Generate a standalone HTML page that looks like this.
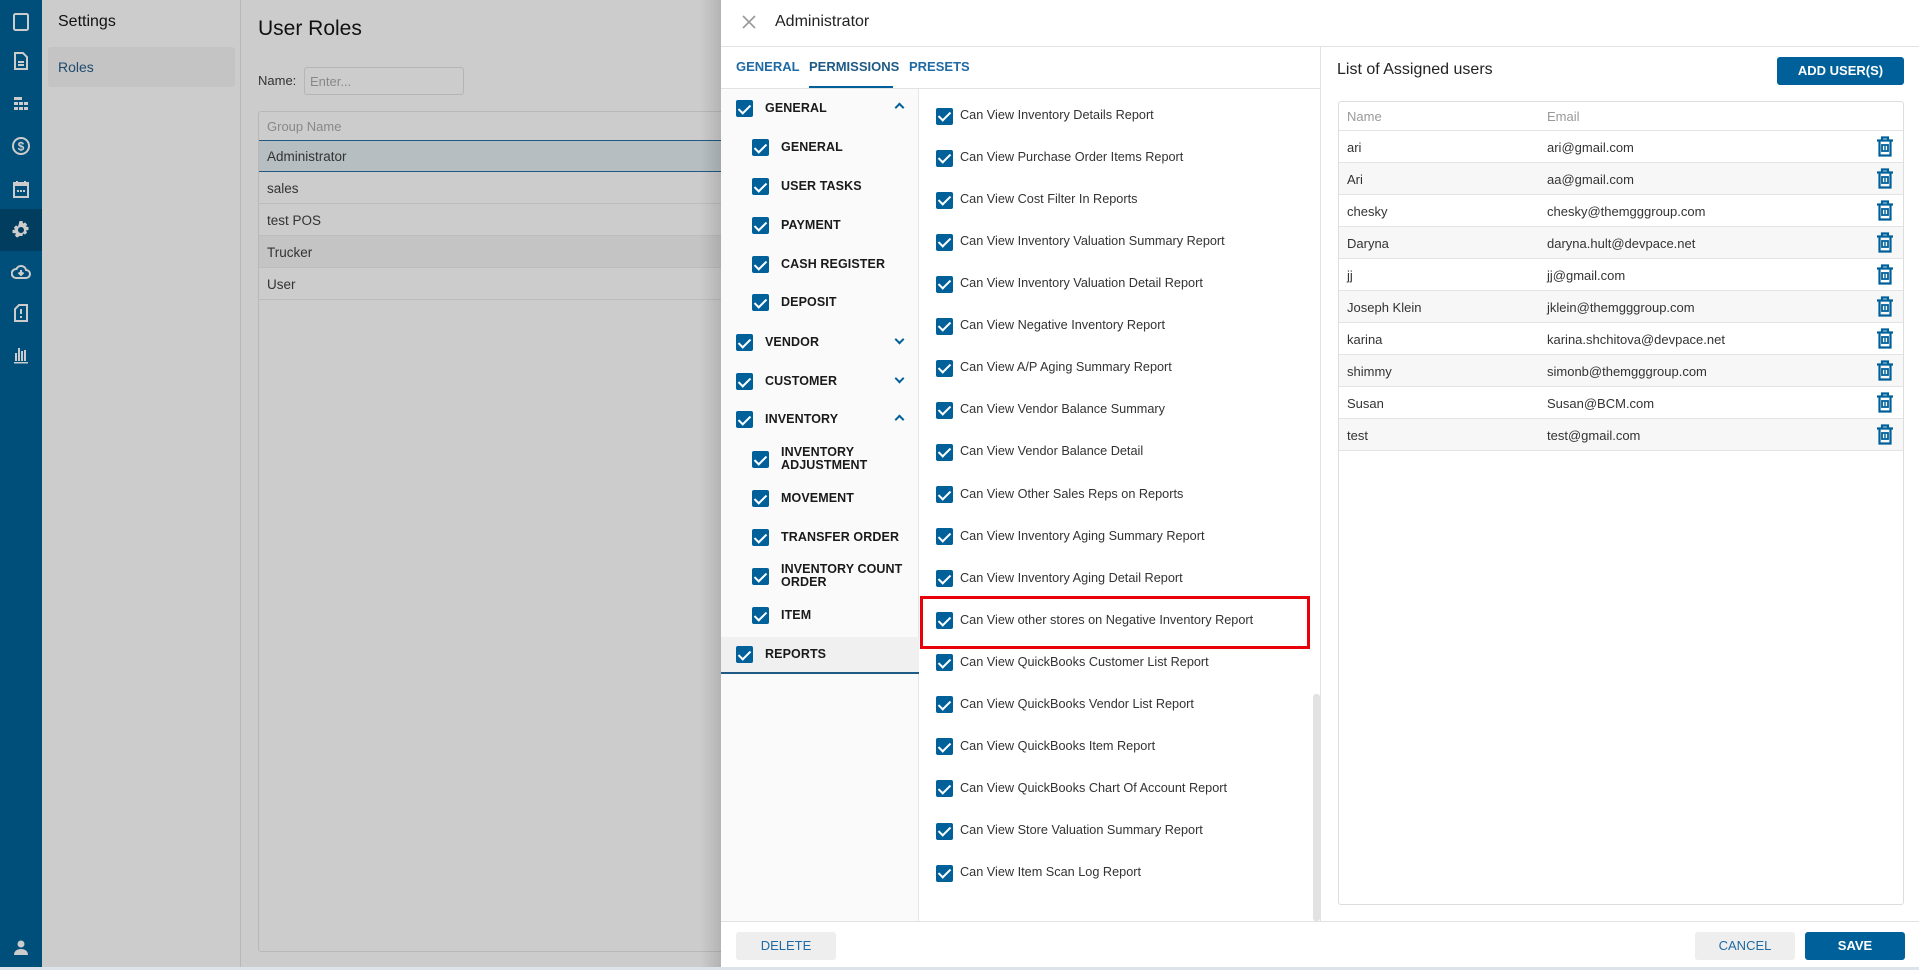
<!DOCTYPE html>
<html><head><meta charset="utf-8">
<style>
*{box-sizing:border-box;margin:0;padding:0}
body{width:1919px;height:970px;overflow:hidden;font-family:"Liberation Sans",sans-serif;background:#cccccc;position:relative;color:#222}
.abs{position:absolute}
.nav{left:0;top:0;width:42px;height:970px;background:#004f7a}
.nav svg{position:absolute;left:11px;width:20px;height:20px}
.cb{position:absolute;width:17px;height:17px;background:#00609a;border-radius:2px}
.cb:after{content:"";position:absolute;left:5px;top:1.5px;width:5px;height:10px;border:solid #fff;border-width:0 2px 2px 0;transform:rotate(45deg)}
.tl{position:absolute;font-size:12.5px;font-weight:bold;color:#1a1a1a;line-height:13px;letter-spacing:.1px}
.pl{position:absolute;left:960px;font-size:12.7px;color:#333}
.btn{position:absolute;border-radius:3px;font-size:13px;font-weight:bold;text-align:center;line-height:28px}
.ur{position:absolute;left:1339px;width:564px;height:32px;border-top:1px solid #e4e4e4;font-size:13px;color:#333}
.ur span{position:absolute;top:9px}
.ur svg{position:absolute;left:536px;top:5px}
.chev{position:absolute;width:7px;height:7px;border:solid #00609a;border-width:2px 2px 0 0}
</style></head><body>
<div class="abs nav">
<svg style="top:12px" viewBox="0 0 20 20"><rect x="3" y="2" width="14" height="16" rx="1.5" fill="none" stroke="#ccc" stroke-width="2"/></svg>
<svg style="top:51px" viewBox="0 0 20 20"><path d="M4 2h8l4 4v12H4z" fill="none" stroke="#ccc" stroke-width="2"/><path d="M7 11h6M7 14h6" stroke="#ccc" stroke-width="2"/></svg>
<svg style="top:94px" viewBox="0 0 20 20"><g fill="#ccc"><rect x="3" y="3" width="8" height="3"/><rect x="3" y="8" width="4" height="3"/><rect x="8" y="8" width="4" height="3"/><rect x="13" y="8" width="4" height="3"/><rect x="3" y="13" width="4" height="3"/><rect x="8" y="13" width="4" height="3"/><rect x="13" y="13" width="4" height="3"/></g></svg>
<svg style="top:136px" viewBox="0 0 20 20"><circle cx="10" cy="10" r="8" fill="none" stroke="#ccc" stroke-width="2"/><text x="10" y="14.5" font-size="12" font-weight="bold" text-anchor="middle" fill="#ccc" font-family="Liberation Sans">$</text></svg>
<svg style="top:179px" viewBox="0 0 20 20"><rect x="3" y="4" width="14" height="14" fill="none" stroke="#ccc" stroke-width="2"/><rect x="3" y="4" width="14" height="3" fill="#ccc"/><path d="M6 2v3M14 2v3" stroke="#ccc" stroke-width="2"/><path d="M6 12h2M9 12h2M12 12h2" stroke="#ccc" stroke-width="2"/></svg>
<div class="abs" style="left:0;top:209px;width:42px;height:42px;background:#003d5e"></div>
<svg style="top:220px" viewBox="0 0 20 20"><path fill="#ccc" d="M8.5 1h3l.5 2.6 2-1.2 2.1 2.1-1.2 2 2.6.5v3l-2.6.5 1.2 2-2.1 2.1-2-1.2-.5 2.6h-3L8 16.4l-2 1.2-2.1-2.1 1.2-2L1.5 13v-3l2.6-.5-1.2-2L5 5.4l2 1.2zM10 7a3 3 0 100 6 3 3 0 000-6z"/></svg>
<svg style="top:262px" viewBox="0 0 20 20"><path d="M5 16h10a4 4 0 000-8 5 5 0 00-9.5-1A4.5 4.5 0 005 16z" fill="none" stroke="#ccc" stroke-width="2"/><path d="M10 8v5M7.5 10.5L10 13l2.5-2.5" stroke="#ccc" stroke-width="2" fill="none"/></svg>
<svg style="top:303px" viewBox="0 0 20 20"><path d="M8 2h8v16H4V6z" fill="none" stroke="#ccc" stroke-width="2"/><path d="M10 6v5M10 13v2" stroke="#ccc" stroke-width="2"/></svg>
<svg style="top:345px" viewBox="0 0 20 20"><g fill="#ccc"><rect x="4" y="8" width="2" height="8"/><rect x="7" y="3" width="2" height="13"/><rect x="10" y="6" width="2" height="10"/><rect x="13" y="5" width="2" height="11"/><rect x="3" y="17" width="14" height="1.5"/></g></svg>
<svg style="top:938px" viewBox="0 0 20 20"><circle cx="10" cy="6" r="3.5" fill="#ccc"/><path d="M3 17c0-4 3-6 7-6s7 2 7 6z" fill="#ccc"/></svg>
</div>
<div class="abs" style="left:42px;top:0;width:199px;height:970px;border-right:1px solid #b8b8b8"></div>
<div class="abs" style="left:58px;top:13px;font-size:16px;color:#111">Settings</div>
<div class="abs" style="left:48px;top:47px;width:187px;height:40px;background:#c4c4c4;border-radius:3px"></div>
<div class="abs" style="left:58px;top:59px;font-size:14px;color:#1f4a6e">Roles</div>
<div class="abs" style="left:258px;top:17px;font-size:21px;color:#111">User Roles</div>
<div class="abs" style="left:258px;top:73px;font-size:13px;color:#333">Name:</div>
<div class="abs" style="left:304px;top:67px;width:160px;height:28px;border:1px solid #b5b5b5;border-radius:3px;font-size:13px;color:#888;padding:6px 5px">Enter...</div>
<div class="abs" style="left:258px;top:111px;width:500px;height:841px;border:1px solid #b8b8b8;border-radius:3px"></div>
<div class="abs" style="left:267px;top:119px;font-size:13px;color:#888">Group Name</div>
<div class="abs" style="left:259px;top:140px;width:470px;height:32px;background:#b6bec2;border-top:1px solid #1f5a85;border-bottom:1px solid #1f5a85"></div>
<div class="abs" style="left:267px;top:149px;font-size:13.5px;color:#333">Administrator</div>
<div class="abs" style="left:259px;top:236px;width:470px;height:32px;background:#c4c4c4"></div>
<div class="abs" style="left:259px;top:203px;width:470px;height:1px;background:#bdbdbd"></div>
<div class="abs" style="left:259px;top:235px;width:470px;height:1px;background:#bdbdbd"></div>
<div class="abs" style="left:259px;top:267px;width:470px;height:1px;background:#bdbdbd"></div>
<div class="abs" style="left:259px;top:299px;width:470px;height:1px;background:#bdbdbd"></div>
<div class="abs" style="left:267px;top:181px;font-size:13.5px;color:#333">sales</div>
<div class="abs" style="left:267px;top:213px;font-size:13.5px;color:#333">test POS</div>
<div class="abs" style="left:267px;top:245px;font-size:13.5px;color:#333">Trucker</div>
<div class="abs" style="left:267px;top:277px;font-size:13.5px;color:#333">User</div>
<div class="abs" style="left:700px;top:0;width:21px;height:970px;background:linear-gradient(90deg,rgba(0,0,0,0),rgba(0,0,0,.12))"></div>

<div class="abs" style="left:721px;top:0;width:1198px;height:967px;background:#fff"></div>
<div class="abs" style="left:0;top:967px;width:1919px;height:3px;background:#dde3ea"></div>
<svg class="abs" style="left:741px;top:14px" width="16" height="16" viewBox="0 0 16 16"><path d="M2 2l12 12M14 2L2 14" stroke="#999" stroke-width="1.6"/></svg>
<div class="abs" style="left:775px;top:13px;font-size:16px;color:#222">Administrator</div>
<div class="abs" style="left:721px;top:46px;width:1198px;height:1px;background:#e2e2e2"></div>
<div class="abs" style="left:736px;top:59px;font-size:13px;font-weight:bold;color:#1f6aa5">GENERAL</div>
<div class="abs" style="left:809px;top:59px;font-size:13px;font-weight:bold;color:#1f5a85">PERMISSIONS</div>
<div class="abs" style="left:909px;top:59px;font-size:13px;font-weight:bold;color:#1f6aa5">PRESETS</div>
<div class="abs" style="left:809px;top:86px;width:84px;height:2px;background:#00609a"></div>
<div class="abs" style="left:721px;top:88px;width:600px;height:1px;background:#e2e2e2"></div>
<div class="abs" style="left:721px;top:89px;width:198px;height:832px;background:#fafafa;border-right:1px solid #e6e6e6"></div>
<div class="abs" style="left:721px;top:637px;width:198px;height:37px;background:#f0f0f0;border-bottom:2px solid #1f5a85"></div>

<div class="cb" style="left:736px;top:100px"></div><div class="tl" style="left:765px;top:102px">GENERAL</div><div class="chev" style="left:896px;top:104px;transform:rotate(-45deg)"></div>
<div class="cb" style="left:752px;top:139px"></div><div class="tl" style="left:781px;top:141px">GENERAL</div>
<div class="cb" style="left:752px;top:178px"></div><div class="tl" style="left:781px;top:180px">USER TASKS</div>
<div class="cb" style="left:752px;top:217px"></div><div class="tl" style="left:781px;top:219px">PAYMENT</div>
<div class="cb" style="left:752px;top:256px"></div><div class="tl" style="left:781px;top:258px">CASH REGISTER</div>
<div class="cb" style="left:752px;top:294px"></div><div class="tl" style="left:781px;top:296px">DEPOSIT</div>
<div class="cb" style="left:736px;top:334px"></div><div class="tl" style="left:765px;top:336px">VENDOR</div><div class="chev" style="left:896px;top:336px;transform:rotate(135deg)"></div>
<div class="cb" style="left:736px;top:373px"></div><div class="tl" style="left:765px;top:375px">CUSTOMER</div><div class="chev" style="left:896px;top:375px;transform:rotate(135deg)"></div>
<div class="cb" style="left:736px;top:411px"></div><div class="tl" style="left:765px;top:413px">INVENTORY</div><div class="chev" style="left:896px;top:416px;transform:rotate(-45deg)"></div>
<div class="cb" style="left:752px;top:451px"></div><div class="tl" style="left:781px;top:446px">INVENTORY<br>ADJUSTMENT</div>
<div class="cb" style="left:752px;top:490px"></div><div class="tl" style="left:781px;top:492px">MOVEMENT</div>
<div class="cb" style="left:752px;top:529px"></div><div class="tl" style="left:781px;top:531px">TRANSFER ORDER</div>
<div class="cb" style="left:752px;top:568px"></div><div class="tl" style="left:781px;top:563px">INVENTORY COUNT<br>ORDER</div>
<div class="cb" style="left:752px;top:607px"></div><div class="tl" style="left:781px;top:609px">ITEM</div>
<div class="cb" style="left:736px;top:646px"></div><div class="tl" style="left:765px;top:648px">REPORTS</div>

<div class="abs" style="left:1313px;top:694px;width:7px;height:227px;background:#e2e2e2;border-radius:3px"></div>
<div class="abs" style="left:1320px;top:47px;width:1px;height:874px;background:#e2e2e2"></div>
<div class="abs" style="left:920px;top:596px;width:390px;height:53px;border:3px solid #e8000b"></div>
<div id="perms"></div>
<script>
var p=["Can View Inventory Details Report","Can View Purchase Order Items Report","Can View Cost Filter In Reports","Can View Inventory Valuation Summary Report","Can View Inventory Valuation Detail Report","Can View Negative Inventory Report","Can View A/P Aging Summary Report","Can View Vendor Balance Summary","Can View Vendor Balance Detail","Can View Other Sales Reps on Reports","Can View Inventory Aging Summary Report","Can View Inventory Aging Detail Report","Can View other stores on Negative Inventory Report","Can View QuickBooks Customer List Report","Can View QuickBooks Vendor List Report","Can View QuickBooks Item Report","Can View QuickBooks Chart Of Account Report","Can View Store Valuation Summary Report","Can View Item Scan Log Report"];
var h="";for(var i=0;i<p.length;i++){var y=116+i*42.06;h+='<div class="cb" style="left:936px;top:'+(y-8.5)+'px"></div><div class="pl" style="top:'+(y-8)+'px">'+p[i]+'</div>';}
document.getElementById("perms").innerHTML=h;
</script>

<div class="abs" style="left:1337px;top:61px;font-size:16px;color:#222">List of Assigned users</div>
<div class="btn" style="left:1777px;top:57px;width:127px;height:28px;background:#00609a;color:#fff">ADD USER(S)</div>
<div class="abs" style="left:1338px;top:101px;width:566px;height:804px;border:1px solid #ddd;border-radius:3px"></div>
<div class="abs" style="left:1347px;top:109px;font-size:13px;color:#999">Name</div>
<div class="abs" style="left:1547px;top:109px;font-size:13px;color:#999">Email</div>
<div id="users"></div>
<script>
var u=[["ari","ari@gmail.com"],["Ari","aa@gmail.com"],["chesky","chesky@themgggroup.com"],["Daryna","daryna.hult@devpace.net"],["jj","jj@gmail.com"],["Joseph Klein","jklein@themgggroup.com"],["karina","karina.shchitova@devpace.net"],["shimmy","simonb@themgggroup.com"],["Susan","Susan@BCM.com"],["test","test@gmail.com"]];
var t='<svg width="20" height="22" viewBox="0 0 20 22"><path d="M7 3.5V1.5h6v2M2 4.5h16M4.5 4.5v15h11v-15" fill="none" stroke="#00609a" stroke-width="2.2"/><rect x="7" y="9" width="6" height="6" fill="none" stroke="#00609a" stroke-width="1.8"/><path d="M10 10v4" stroke="#00609a" stroke-width="1.4"/></svg>';
var h="";for(var i=0;i<u.length;i++){h+='<div class="ur" style="top:'+(130+i*32)+'px;background:'+(i%2?'#f7f7f7':'#fff')+'"><span style="left:8px">'+u[i][0]+'</span><span style="left:208px">'+u[i][1]+'</span>'+t+'</div>';}
h+='<div class="abs" style="left:1339px;top:450px;width:564px;height:1px;background:#e4e4e4"></div>';
document.getElementById("users").innerHTML=h;
</script>
<div class="abs" style="left:721px;top:921px;width:1198px;height:1px;background:#e2e2e2"></div>
<div class="btn" style="left:736px;top:932px;width:100px;height:28px;background:#eeeeee;color:#1f6aa5;font-weight:normal">DELETE</div>
<div class="btn" style="left:1695px;top:932px;width:100px;height:28px;background:#eeeeee;color:#1f6aa5;font-weight:normal">CANCEL</div>
<div class="btn" style="left:1805px;top:932px;width:100px;height:28px;background:#00609a;color:#fff">SAVE</div>
</body></html>
